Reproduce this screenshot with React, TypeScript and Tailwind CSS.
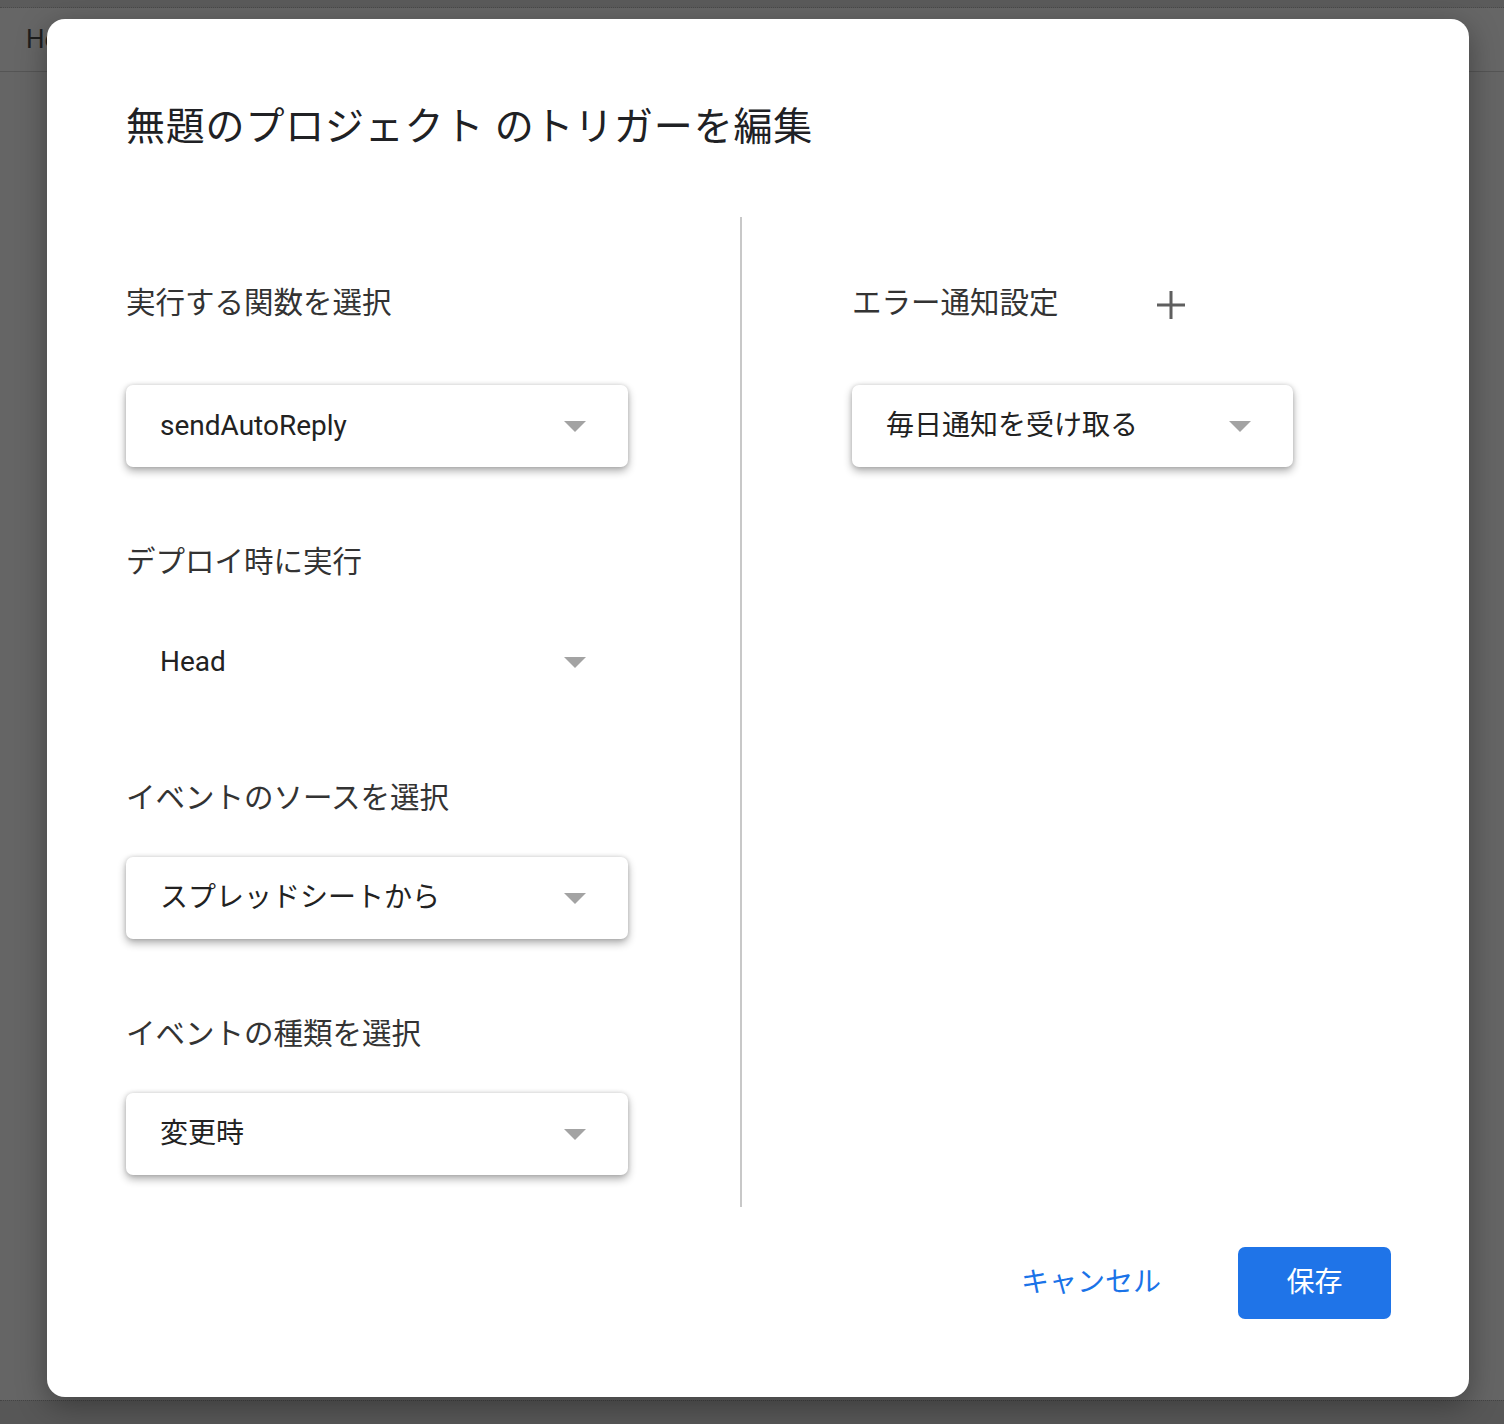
import React from 'react';

const font = { fontFamily: 'Roboto, "Noto Sans CJK JP", sans-serif' };

function Caret() {
    return (
        <svg width="22" height="11" viewBox="0 0 22 11" className="shrink-0">
            <path d="M0 0 L22 0 L11 11 Z" fill="#a3a3a3" />
        </svg>
    );
}

function Select({ value, width, flat }: { value: string; width: string; flat?: boolean }) {
    return (
        <div
            className={`${width} h-[82px] flex items-center justify-between pl-[34px] pr-[42px] rounded-[7px] bg-white ${
                flat ? '' : 'shadow-[0_4px_9px_rgba(0,0,0,0.32),0_0_4px_rgba(0,0,0,0.15)]'
            }`}
        >
            <span className="text-[28px] leading-none text-[#222]">{value}</span>
            <Caret />
        </div>
    );
}

function Label({ children, className = '' }: { children: React.ReactNode; className?: string }) {
    return <div className={`h-10 flex items-center text-[29.5px] text-[#333] ${className}`}>{children}</div>;
}

export default function App() {
    return (
        <div className="relative w-[1504px] h-[1424px] bg-[#656565] overflow-hidden" style={font}>
            {/* page behind the dialog */}
            <div className="h-2 bg-[#5b5b5b] border-b border-dotted border-[#4a4a4a]" />
            <div className="h-[64px] flex items-center pl-[26px] border-b border-[#555] bg-[#666]">
                <span className="text-[26px] text-[#1e1e1e]">Head</span>
            </div>
            <div className="absolute left-0 right-0 bottom-0 h-[24px] bg-[#575757] border-t border-dotted border-[#444]" />

            {/* dialog */}
            <div className="absolute left-[47px] top-[19px] w-[1422px] h-[1378px] bg-white rounded-[18px] shadow-[0_8px_30px_rgba(0,0,0,0.35)] flex flex-col pl-[79px] pr-[78px] pt-[84px]">
                <h1 className="h-[48px] flex items-center text-[39px] font-normal text-[#202124] tracking-[0.8px]">
                    無題のプロジェクト のトリガーを編集
                </h1>

                <div className="mt-[66px] flex">
                    <div className="w-[614px] flex flex-col pt-[66px] pb-[32px]">
                        <Label>実行する関数を選択</Label>
                        <div className="mt-[62px]">
                            <Select value="sendAutoReply" width="w-[502px]" />
                        </div>

                        <Label className="mt-[75px]">デプロイ時に実行</Label>
                        <div className="mt-[39px]">
                            <Select value="Head" width="w-[502px]" flat />
                        </div>

                        <Label className="mt-[75px]">イベントのソースを選択</Label>
                        <div className="mt-[39px]">
                            <Select value="スプレッドシートから" width="w-[502px]" />
                        </div>

                        <Label className="mt-[75px]">イベントの種類を選択</Label>
                        <div className="mt-[39px]">
                            <Select value="変更時" width="w-[502px]" />
                        </div>
                    </div>

                    <div className="w-[2px] bg-[#c8c8c8]" />

                    <div className="flex flex-col pl-[110px] pt-[66px]">
                        <div className="flex items-center">
                            <Label>エラー通知設定</Label>
                            <button className="ml-[98px] mt-[4px] w-[28px] h-[28px] flex items-center justify-center">
                                <svg width="28" height="28" viewBox="0 0 28 28">
                                    <path d="M14 0 V28 M0 14 H28" stroke="#5f5f5f" strokeWidth="3" />
                                </svg>
                            </button>
                        </div>
                        <div className="mt-[62px]">
                            <Select value="毎日通知を受け取る" width="w-[441px]" />
                        </div>
                    </div>
                </div>

                <div className="mt-[40px] flex justify-end items-center gap-[77px]">
                    <button className="h-[72px] px-0 text-[28px] text-[#1a73e8]">キャンセル</button>
                    <button className="w-[153px] h-[72px] rounded-[7px] bg-[#1f74e8] text-white text-[28px]">保存</button>
                </div>
            </div>
        </div>
    );
}
